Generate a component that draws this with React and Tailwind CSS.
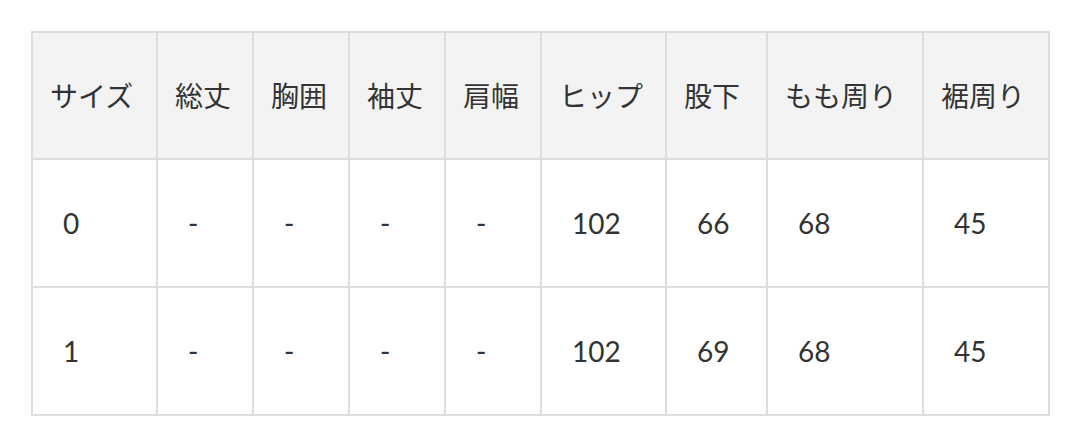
import React from 'react'

const HEADERS = ['サイズ', '総丈', '胸囲', '袖丈', '肩幅', 'ヒップ', '股下', 'もも周り', '裾周り']
const WIDTHS = ['w-[125px]', 'w-[96px]', 'w-[96px]', 'w-[96px]', 'w-[96px]', 'w-[125px]', 'w-[101px]', 'w-[156px]', 'w-[126px]']
const ROWS = [
  ['0', '-', '-', '-', '-', '102', '66', '68', '45'],
  ['1', '-', '-', '-', '-', '102', '69', '68', '45'],
]

export default function App() {
  return (
    <div className="bg-white w-[1080px] h-[446px] pt-[31px] pl-[31px] font-['Lato','Noto_Sans_CJK_JP',sans-serif] text-[#333]">
      <table className="table-fixed border-collapse border-2 border-[#ddd] w-[1019px] text-[28px]">
        <colgroup>
          {WIDTHS.map((w, i) => <col key={i} className={w} />)}
        </colgroup>
        <thead>
          <tr className="h-[127px] bg-[#f3f3f3]">
            {HEADERS.map((h, i) => (
              <th key={i} className="border-2 border-[#ddd] px-[17px] text-left font-normal whitespace-nowrap">{h}</th>
            ))}
          </tr>
        </thead>
        <tbody>
          {ROWS.map((row, r) => (
            <tr key={r} className="h-[128px]">
              {row.map((c, i) => (
                <td key={i} className="border-2 border-[#ddd] pl-[30px] text-left">{c}</td>
              ))}
            </tr>
          ))}
        </tbody>
      </table>
    </div>
  )
}
